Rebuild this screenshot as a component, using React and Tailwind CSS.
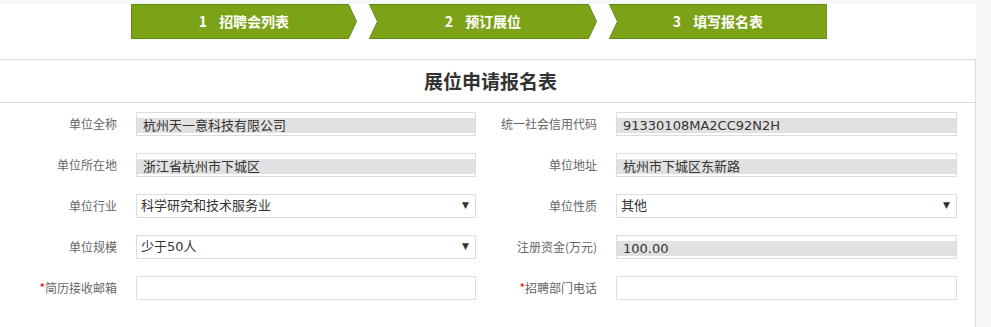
// App.jsx
// Booking step bar + "展位申请报名表" company info form.
import React from 'react';

const CJK = '"Noto Sans CJK SC", "Liberation Sans", sans-serif';
const VALUE = '"DejaVu Sans", "Noto Sans CJK SC", sans-serif';

const steps = [
  { n: 1, label: '招聘会列表', w: 226, points: '0.5,0.5 217.5,0.5 225.5,17.5 217.5,34.5 0.5,34.5' },
  { n: 2, label: '预订展位', w: 228, points: '0.5,0.5 219.5,0.5 227.5,17.5 219.5,34.5 0.5,34.5 8.5,17.5' },
  { n: 3, label: '填写报名表', w: 218, points: '0.5,0.5 218,0.5 218,34.5 0.5,34.5 8.5,17.5' },
];

function Step({ step }) {
  return (
    <div className="relative h-[35px] flex items-center justify-center" style={{ width: step.w }}>
      <svg className="absolute inset-0" width={step.w} height="35" viewBox={`0 0 ${step.w} 35`}>
        <polygon points={step.points} fill="#7ca318" stroke="#5b8a17" strokeWidth="1" />
      </svg>
      <span className="relative text-white text-[14px] font-bold" style={{ fontFamily: CJK }}>
        {step.n}
        <span className="inline-block w-[12px]" />
        {step.label}
      </span>
    </div>
  );
}

function Label({ children, required }) {
  return (
    <div className="w-[117px] text-right text-[12px] text-[#666] shrink-0" style={{ fontFamily: CJK }}>
      {required && <span className="text-[#f00]">*</span>}
      {children}
    </div>
  );
}

function ReadOnly({ value, w }) {
  return (
    <div className="h-6 border border-[#dcdcdc] bg-white pt-[5px] pb-[2px]" style={{ width: w }}>
      <div
        className="h-[15px] bg-[#e1e1e1] pl-[6px] text-[13px] text-[#333] leading-[15px] whitespace-nowrap"
        style={{ fontFamily: VALUE }}
      >
        {value}
      </div>
    </div>
  );
}

function Select({ value, w }) {
  return (
    <div
      className="h-6 border border-[#dcdcdc] bg-white pl-[4px] pr-[6px] flex items-center justify-between text-[13px] text-[#333]"
      style={{ width: w, fontFamily: VALUE }}
    >
      <span>{value}</span>
      <span className="text-[9px] text-[#333]">▼</span>
    </div>
  );
}

function Empty({ w }) {
  return <div className="h-6 border border-[#dcdcdc] bg-white" style={{ width: w }} />;
}

function Field({ label, required, children }) {
  return (
    <div className="flex items-center gap-[19px]">
      <Label required={required}>{label}</Label>
      {children}
    </div>
  );
}

export default function App() {
  return (
    <div className="w-[991px] h-[327px] bg-[#f7f7f7] pt-1 overflow-hidden">
      <div className="w-[976px] h-full bg-white">
        {/* ── Steps ── */}
        <div className="flex gap-3 pl-[131px]">
          {steps.map((s) => (
            <Step key={s.n} step={s} />
          ))}
        </div>

        {/* ── Form panel ── */}
        <div className="mt-5 border-t border-r border-[#dcdcdc] h-full">
          <div className="h-[43px] border-b border-[#dcdcdc] flex items-center justify-center">
            <h2 className="text-[19px] font-bold text-[#333] pl-[6px]" style={{ fontFamily: CJK }}>
              展位申请报名表
            </h2>
          </div>

          <div className="grid grid-cols-[480px_480px] gap-y-[17px] pt-[9px]">
            <Field label="单位全称">
              <ReadOnly w={340} value="杭州天一意科技有限公司" />
            </Field>
            <Field label="统一社会信用代码">
              <ReadOnly w={341} value="91330108MA2CC92N2H" />
            </Field>

            <Field label="单位所在地">
              <ReadOnly w={340} value="浙江省杭州市下城区" />
            </Field>
            <Field label="单位地址">
              <ReadOnly w={341} value="杭州市下城区东新路" />
            </Field>

            <Field label="单位行业">
              <Select w={340} value="科学研究和技术服务业" />
            </Field>
            <Field label="单位性质">
              <Select w={341} value="其他" />
            </Field>

            <Field label="单位规模">
              <Select w={340} value="少于50人" />
            </Field>
            <Field label="注册资金(万元)">
              <ReadOnly w={341} value="100.00" />
            </Field>

            <Field label="简历接收邮箱" required>
              <Empty w={340} />
            </Field>
            <Field label="招聘部门电话" required>
              <Empty w={341} />
            </Field>
          </div>
        </div>
      </div>
    </div>
  );
}
